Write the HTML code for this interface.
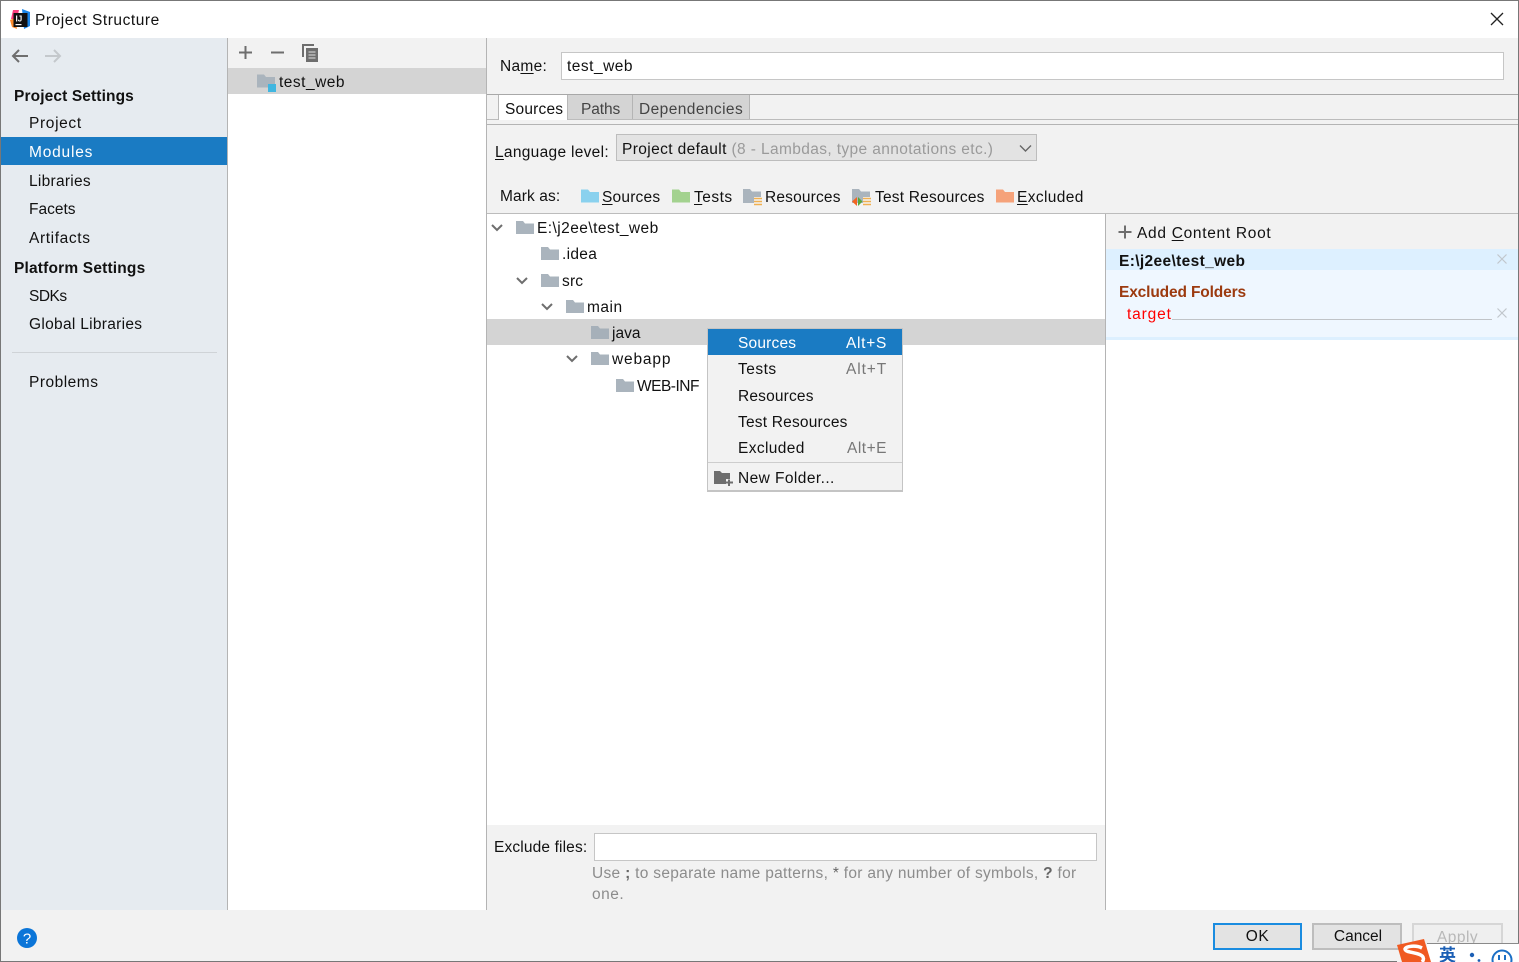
<!DOCTYPE html>
<html><head><meta charset="utf-8"><title>Project Structure</title>
<style>
html,body{margin:0;padding:0;width:1519px;height:962px;overflow:hidden;background:#f2f2f2}
body{position:relative;font-family:"Liberation Sans","Noto Sans CJK SC",sans-serif;font-size:15.5px;letter-spacing:.5px;color:#111}
.b,.t,svg{position:absolute}
.t{white-space:nowrap;line-height:20px;height:20px;margin-top:1px}
u{text-underline-offset:2px;text-decoration-thickness:1px}
.g{color:#8c8c8c}
.h{color:#777}
svg{overflow:visible}
</style></head><body>
<svg width="0" height="0" style="left:0;top:0"><defs>
<symbol id="f" viewBox="0 0 18 13" overflow="visible"><path d="M0 0H7L9 2.5H18V13H0Z"/></symbol>
</defs></svg>

<!-- panels -->
<div class="b" style="left:0;top:0;width:1519px;height:38px;background:#fff"></div>
<div class="b" style="left:0;top:38px;width:227px;height:872px;background:#e6ebf0"></div>
<div class="b" style="left:227px;top:38px;width:1px;height:872px;background:#b4b4b4"></div>
<div class="b" style="left:228px;top:38px;width:258px;height:30px;background:#f2f2f2"></div>
<div class="b" style="left:228px;top:68px;width:258px;height:842px;background:#fff"></div>
<div class="b" style="left:228px;top:68px;width:258px;height:26px;background:#d4d4d4"></div>
<div class="b" style="left:486px;top:38px;width:1px;height:872px;background:#b4b4b4"></div>
<div class="b" style="left:1px;top:137px;width:226px;height:28px;background:#1a7bc3"></div>
<div class="b" style="left:12px;top:352px;width:205px;height:1px;background:#cfd3d7"></div>

<!-- window border -->
<div class="b" style="left:0;top:0;width:1519px;height:1px;background:#777;z-index:5"></div>
<div class="b" style="left:0;top:0;width:1px;height:962px;background:#777;z-index:5"></div>
<div class="b" style="left:1518px;top:0;width:1px;height:943px;background:#777;z-index:5"></div>
<div class="b" style="left:0;top:961px;width:1397px;height:1px;background:#777;z-index:5"></div>

<!-- title -->
<svg style="left:10px;top:9px" width="21" height="21" viewBox="0 0 21 21">
<path d="M3 1L9 1 7 10 1 10Z" fill="#fc3f7d"/><path d="M0 11L5 9 7 20 2 18Z" fill="#fd8a2b"/><path d="M12 0L20 3 20 17 14 20Z" fill="#1a85e8"/>
<rect x="3.5" y="4" width="14" height="14" fill="#111"/><rect x="5.5" y="15" width="6" height="1.2" fill="#fff"/>
<text x="5.5" y="12.5" font-size="8" font-weight="700" letter-spacing="0" fill="#fff" font-family="Liberation Sans">IJ</text></svg>
<div class="t" style="left:35px;top:10px;letter-spacing:.55px">Project Structure</div>
<svg style="left:1490px;top:12px" width="14" height="14"><path d="M1 1L13 13M13 1L1 13" stroke="#222" stroke-width="1.3" fill="none"/></svg>

<!-- sidebar -->
<svg style="left:11px;top:48px" width="18" height="16"><path d="M17 8H2M8 2L2 8L8 14" stroke="#6e6e6e" stroke-width="2" fill="none"/></svg>
<svg style="left:44px;top:48px" width="18" height="16"><path d="M1 8H16M10 2L16 8L10 14" stroke="#c4c8cc" stroke-width="2" fill="none"/></svg>
<div class="t" style="left:14px;top:86px;font-weight:700;letter-spacing:.12px">Project Settings</div>
<div class="t" style="left:29px;top:113px;letter-spacing:.65px">Project</div>
<div class="t" style="left:29px;top:142px;color:#fff;letter-spacing:.8px">Modules</div>
<div class="t" style="left:29px;top:171px;letter-spacing:.28px">Libraries</div>
<div class="t" style="left:29px;top:199px;letter-spacing:0">Facets</div>
<div class="t" style="left:29px;top:228px;letter-spacing:.62px">Artifacts</div>
<div class="t" style="left:14px;top:258px;font-weight:700;letter-spacing:.18px">Platform Settings</div>
<div class="t" style="left:29px;top:286px;letter-spacing:-.5px">SDKs</div>
<div class="t" style="left:29px;top:314px;letter-spacing:.3px">Global Libraries</div>
<div class="t" style="left:29px;top:372px">Problems</div>

<!-- module list -->
<svg style="left:239px;top:46px" width="13" height="13"><path d="M6.5 0V13M0 6.5H13" stroke="#6e6e6e" stroke-width="2"/></svg>
<svg style="left:271px;top:46px" width="13" height="13"><path d="M0 6.5H13" stroke="#6e6e6e" stroke-width="2"/></svg>
<svg style="left:302px;top:44px" width="16" height="18"><path d="M1 13V1H12" stroke="#6e6e6e" stroke-width="2" fill="none"/><rect x="4" y="4" width="12" height="14" fill="#6e6e6e"/><path d="M6.5 8H13.5M6.5 11H13.5M6.5 14H13.5" stroke="#e0e0e0" stroke-width="1"/></svg>
<svg style="left:257px;top:74px;fill:#aab4bd" width="18" height="14"><use href="#f" width="18" height="14"/></svg>
<div class="b" style="left:268px;top:84px;width:8px;height:8px;background:#40b6e0"></div>
<div class="t" style="left:279px;top:72px">test_web</div>

<!-- name -->
<div class="t" style="left:500px;top:56px;letter-spacing:.3px">Na<u>m</u>e:</div>
<div class="b" style="left:561px;top:52px;width:941px;height:26px;background:#fff;border:1px solid #c6c6c6"></div>
<div class="t" style="left:567px;top:56px">test_web</div>

<!-- tabs -->
<div class="b" style="left:487px;top:94px;width:1032px;height:1px;background:#a8a8a8"></div>
<div class="b" style="left:487px;top:119px;width:1032px;height:1px;background:#bcbcbc"></div>
<div class="b" style="left:487px;top:124px;width:1032px;height:1px;background:#b4b4b4"></div>
<div class="b" style="left:498px;top:95px;width:70px;height:25px;background:#fff;border-left:1px solid #b8b8b8;border-right:1px solid #b8b8b8;box-sizing:border-box"></div>
<div class="b" style="left:568px;top:95px;width:65px;height:24px;background:#d4d4d4;border-right:1px solid #b4b4b4;box-sizing:border-box"></div>
<div class="b" style="left:633px;top:95px;width:117px;height:24px;background:#d4d4d4;border-right:1px solid #b4b4b4;box-sizing:border-box"></div>
<div class="t" style="left:505px;top:99px;letter-spacing:.2px">Sources</div>
<div class="t" style="left:581px;top:99px;color:#444;letter-spacing:-.1px">Paths</div>
<div class="t" style="left:639px;top:99px;color:#444;letter-spacing:.42px">Dependencies</div>

<!-- language -->
<div class="t" style="left:495px;top:142px;letter-spacing:.3px"><u>L</u>anguage level:</div>
<div class="b" style="left:616px;top:134px;width:419px;height:25px;background:#e3e3e3;border:1px solid #bdbdbd"></div>
<div class="t" style="left:622px;top:139px;letter-spacing:.38px">Project default <span style="color:#9a9a9a">(8 - Lambdas, type annotations etc.)</span></div>
<svg style="left:1019px;top:144px" width="13" height="9"><path d="M1 1.5L6.5 7L12 1.5" stroke="#666" stroke-width="1.4" fill="none"/></svg>

<!-- mark as -->
<div class="t" style="left:500px;top:186px;letter-spacing:.1px">Mark as:</div>
<svg style="left:581px;top:189px;fill:#8ad1ee" width="18" height="14"><use href="#f" width="18" height="14"/></svg>
<div class="t" style="left:602px;top:187px;letter-spacing:.2px"><u>S</u>ources</div>
<svg style="left:672px;top:189px;fill:#a3d28f" width="18" height="14"><use href="#f" width="18" height="14"/></svg>
<div class="t" style="left:694px;top:187px"><u>T</u>ests</div>
<svg style="left:743px;top:189px" width="20" height="18"><path d="M0 0H7L9 2.5H18V8H11V14H0Z" fill="#aab4bd"/><path d="M11 9.5H19M11 12.5H19M11 15.5H19" stroke="#f0b050" stroke-width="1.5"/></svg>
<div class="t" style="left:765px;top:187px;letter-spacing:.17px">Resources</div>
<svg style="left:852px;top:189px" width="20" height="18"><path d="M0 0H7L9 2.5H18V8H11V14H0Z" fill="#aab4bd"/><path d="M11 9.5H19M11 12.5H19M11 15.5H19" stroke="#f0b050" stroke-width="1.5"/><path d="M5 8L0 12.5L5 17Z" fill="#f26522"/><path d="M6 8L10.5 12.5L6 17Z" fill="#57a63c"/></svg>
<div class="t" style="left:875px;top:187px;letter-spacing:.2px">Test Resources</div>
<svg style="left:996px;top:189px;fill:#f5a27a" width="18" height="14"><use href="#f" width="18" height="14"/></svg>
<div class="t" style="left:1017px;top:187px;letter-spacing:.38px"><u>E</u>xcluded</div>
<div class="b" style="left:487px;top:213px;width:1032px;height:1px;background:#bcbcbc"></div>

<!-- tree -->
<div class="b" style="left:487px;top:214px;width:618px;height:611px;background:#fff"></div>
<div class="b" style="left:487px;top:319px;width:618px;height:26px;background:#d4d4d4"></div>
<div class="b" style="left:1105px;top:214px;width:1px;height:696px;background:#b4b4b4"></div>

<svg style="left:0;top:0;fill:none;stroke:#6e6e6e;stroke-width:2" width="1519" height="962">
<path d="M492 225L497 230L502 225M517 278L522 283L527 278M542 304L547 309L552 304M567 356L572 361L577 356"/></svg>
<svg style="left:516px;top:221px;fill:#aab4bd" width="18" height="13"><use href="#f" width="18" height="13"/></svg>
<div class="t" style="left:537px;top:218px;letter-spacing:.44px">E:\j2ee\test_web</div>
<svg style="left:541px;top:247px;fill:#aab4bd" width="18" height="13"><use href="#f" width="18" height="13"/></svg>
<div class="t" style="left:562px;top:244px;letter-spacing:.3px">.idea</div>
<svg style="left:541px;top:274px;fill:#aab4bd" width="18" height="13"><use href="#f" width="18" height="13"/></svg>
<div class="t" style="left:562px;top:271px;letter-spacing:.2px">src</div>
<svg style="left:566px;top:300px;fill:#aab4bd" width="18" height="13"><use href="#f" width="18" height="13"/></svg>
<div class="t" style="left:587px;top:297px">main</div>
<svg style="left:591px;top:326px;fill:#a6b0b9" width="18" height="13"><use href="#f" width="18" height="13"/></svg>
<div class="t" style="left:612px;top:323px;letter-spacing:0">java</div>
<svg style="left:591px;top:352px;fill:#aab4bd" width="18" height="13"><use href="#f" width="18" height="13"/></svg>
<div class="t" style="left:612px;top:349px;letter-spacing:.83px">webapp</div>
<svg style="left:616px;top:379px;fill:#aab4bd" width="18" height="13"><use href="#f" width="18" height="13"/></svg>
<div class="t" style="left:637px;top:376px;letter-spacing:-.5px">WEB-INF</div>

<!-- popup -->
<div class="b" style="left:707px;top:328px;width:194px;height:161px;background:#f2f2f2;border:1px solid #c4c4c4;border-bottom:2px solid #c4c4c4"></div>
<div class="b" style="left:708px;top:329px;width:194px;height:26px;background:#1a7bc3"></div>
<div class="b" style="left:708px;top:462px;width:194px;height:1px;background:#cdcdcd"></div>
<div class="t" style="left:738px;top:333px;color:#fff;letter-spacing:.2px">Sources</div>
<div class="t" style="left:846px;top:333px;color:#fff;letter-spacing:.7px">Alt+S</div>
<div class="t" style="left:738px;top:359px">Tests</div>
<div class="t h" style="left:846px;top:359px;letter-spacing:.9px">Alt+T</div>
<div class="t" style="left:738px;top:386px;letter-spacing:.17px">Resources</div>
<div class="t" style="left:738px;top:412px;letter-spacing:.2px">Test Resources</div>
<div class="t" style="left:738px;top:438px;letter-spacing:.38px">Excluded</div>
<div class="t h" style="left:847px;top:438px">Alt+E</div>
<svg style="left:714px;top:471px" width="19" height="15"><path d="M0 0H6L8 2H16V8H12V13H0Z" fill="#6e6e6e"/><path d="M15 8.5V15M12 11.5H19" stroke="#6e6e6e" stroke-width="2"/></svg>
<div class="t" style="left:738px;top:468px;letter-spacing:.42px">New Folder...</div>

<!-- content roots -->
<svg style="left:1118px;top:225px" width="14" height="14"><path d="M7 0.5V13.5M0.5 7H13.5" stroke="#6e6e6e" stroke-width="2"/></svg>
<div class="t" style="left:1137px;top:223px;letter-spacing:.7px">Add <u>C</u>ontent Root</div>
<div class="b" style="left:1106px;top:249px;width:412px;height:21px;background:#ddf0ff"></div>
<div class="b" style="left:1106px;top:270px;width:412px;height:67px;background:#eff7ff"></div>
<div class="b" style="left:1106px;top:337px;width:412px;height:3px;background:#ddf0ff"></div>
<div class="b" style="left:1106px;top:340px;width:412px;height:570px;background:#fff"></div>
<div class="t" style="left:1119px;top:251px;font-weight:700;letter-spacing:.36px">E:\j2ee\test_web</div>
<svg style="left:1497px;top:254px" width="10" height="10"><path d="M.5 .5L9.5 9.5M9.5 .5L.5 9.5" stroke="#c0c6cc" stroke-width="1.2"/></svg>
<div class="t" style="left:1119px;top:282px;font-weight:700;color:#9c3a0f;letter-spacing:-.14px">Excluded Folders</div>
<div class="t" style="left:1127px;top:304px;color:#f00;letter-spacing:.85px">target</div>
<div class="b" style="left:1172px;top:319px;width:320px;height:1px;background:#c0c4c8"></div>
<svg style="left:1497px;top:308px" width="10" height="10"><path d="M.5 .5L9.5 9.5M9.5 .5L.5 9.5" stroke="#c0c6cc" stroke-width="1.2"/></svg>

<!-- exclude -->
<div class="t" style="left:494px;top:837px;letter-spacing:.14px">Exclude files:</div>
<div class="b" style="left:594px;top:833px;width:501px;height:26px;background:#fff;border:1px solid #c6c6c6"></div>
<div class="t g" style="left:592px;top:863px;letter-spacing:.3px">Use <b style="color:#666">;</b> to separate name patterns, <b style="color:#666;font-weight:400">*</b> for any number of symbols, <b style="color:#666">?</b> for</div>
<div class="t g" style="left:592px;top:884px">one.</div>

<!-- footer -->
<svg style="left:17px;top:928px" width="20" height="20"><circle cx="10" cy="10" r="10" fill="#0b75d8"/><text x="10" y="15.5" text-anchor="middle" font-size="15" letter-spacing="0" fill="#fff" font-family="Liberation Sans">?</text></svg>
<div class="b" style="left:1213px;top:923px;width:85px;height:23px;background:#e3e3e3;border:2px solid #1a8ce0"></div>
<div class="t" style="left:1213px;top:926px;width:89px;text-align:center">OK</div>
<div class="b" style="left:1312px;top:923px;width:86px;height:23px;background:#e3e3e3;border:2px solid #bdbdbd"></div>
<div class="t" style="left:1313px;top:926px;width:90px;text-align:center;letter-spacing:0">Cancel</div>
<div class="b" style="left:1412px;top:923px;width:87px;height:24px;background:#efefef;border:2px solid #d6d6d6"></div>
<div class="t" style="left:1412px;top:927px;width:91px;text-align:center;color:#b8b8b8">Apply</div>

<!-- IME bar -->
<div class="b" style="left:1427px;top:943px;width:92px;height:19px;background:#fff;border-top:1px solid #8a8a8a;box-sizing:border-box;z-index:6"></div>
<svg style="left:1396px;top:939px;z-index:7" width="36" height="23"><path d="M1 6L28 0L35 23H6Z" fill="#f05a22"/><path d="M26 9C20 6 10 7 9 10C9 14 24 13 27 18C28 20 27 22 26 23" stroke="#fff" stroke-width="3.5" fill="none"/></svg>
<div class="t" style="left:1439px;top:945px;z-index:7;font-size:17px;font-weight:700;letter-spacing:0;color:#1b5fb5">英</div>
<svg style="left:1468px;top:952px;z-index:7" width="14" height="10"><circle cx="4" cy="3" r="2.2" fill="#1b5fb5"/><circle cx="11" cy="8.5" r="1.4" fill="#1b5fb5"/></svg>
<svg style="left:1491px;top:949px;z-index:7" width="22" height="13"><circle cx="11" cy="11" r="9.5" fill="none" stroke="#1b6fc5" stroke-width="2"/><path d="M8 6V11M14 6V11" stroke="#1b6fc5" stroke-width="2"/></svg>
</body></html>
